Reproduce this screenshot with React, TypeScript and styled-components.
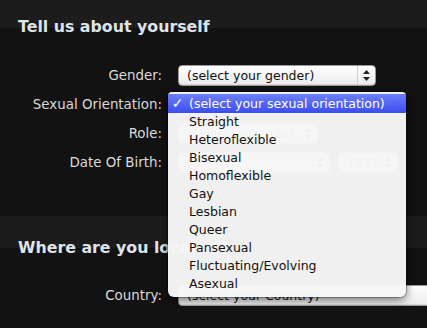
import React from 'react';
import styled, { createGlobalStyle } from 'styled-components';

const GlobalStyle = createGlobalStyle`
    html, body {
        margin: 0;
        background: #121212;
    }
    body {
        font-family: "DejaVu Sans", Verdana, sans-serif;
        overflow: hidden;
    }
`;

const Section = styled.section<{ $bottom: number }>`
    padding-bottom: ${p => p.$bottom}px;
`;

const Heading = styled.h2<{ $band: number; $top: number }>`
    margin: 0;
    padding: ${p => p.$top}px 18px 0;
    font-size: 15.8px;
    line-height: 18px;
    font-weight: bold;
    color: #dfe3ea;
    background: linear-gradient(#1c1c1c 0 ${p => p.$band}px, transparent ${p => p.$band}px);
`;

const Form = styled.div<{ $top: number }>`
    display: grid;
    grid-template-columns: 162px auto;
    grid-auto-rows: 21px;
    column-gap: 16px;
    row-gap: 8px;
    padding-top: ${p => p.$top}px;
`;

const Label = styled.div`
    text-align: right;
    font-size: 13.4px;
    line-height: 21px;
    color: #dadada;
    white-space: nowrap;
`;

const Controls = styled.div`
    position: relative;
    display: flex;
    gap: 8px;
`;

const SelectBox = styled.div<{ $width: number }>`
    display: flex;
    box-sizing: border-box;
    width: ${p => p.$width}px;
    flex-shrink: 0;
    height: 21px;
    border-radius: 4px;
    border: 1px solid #9a9a9a;
    background: linear-gradient(#ffffff, #ebebeb);
    box-shadow: inset 0 -1px 0 #d8d8d8;
    overflow: hidden;
`;

const SelectText = styled.div`
    flex: 1;
    padding-left: 8px;
    font-size: 12.5px;
    line-height: 19px;
    color: #111;
    white-space: nowrap;
    overflow: hidden;
`;

const Stepper = styled.div`
    width: 17px;
    display: flex;
    align-items: center;
    justify-content: center;
    border-left: 1px solid #cfcfcf;
`;

const Menu = styled.ul`
    position: absolute;
    z-index: 10;
    left: -10px;
    top: -2px;
    width: 238px;
    margin: 0;
    padding: 2px 0 4px;
    list-style: none;
    border-radius: 4px 4px 6px 6px;
    background: rgba(246, 246, 246, 0.975);
    box-shadow: 0 3px 10px rgba(0, 0, 0, 0.55), 0 0 0 1px rgba(0, 0, 0, 0.25);
`;

const Item = styled.li<{ $active?: boolean }>`
    display: flex;
    height: ${p => (p.$active ? 19 : 18)}px;
    line-height: ${p => (p.$active ? 19 : 18)}px;
    font-size: 12.5px;
    color: ${p => (p.$active ? '#fff' : '#111')};
    background: ${p => (p.$active ? 'linear-gradient(#6c7ff6, #3a4def)' : 'transparent')};
    white-space: nowrap;
`;

const Check = styled.span`
    width: 21px;
    padding-right: 2px;
    box-sizing: border-box;
    text-align: center;
    font-size: 14px;
    font-weight: bold;
`;

const Arrows = () => (
    <svg width="7" height="11" viewBox="0 0 7 11">
        <path d="M3.5 0 L7 4 L0 4 Z M0 7 L7 7 L3.5 11 Z" fill="#222" />
    </svg>
);

const Select = ({ width, text }: { width: number; text: string }) => (
    <SelectBox $width={width}>
        <SelectText>{text}</SelectText>
        <Stepper>
            <Arrows />
        </Stepper>
    </SelectBox>
);

const orientations = [
    'Straight',
    'Heteroflexible',
    'Bisexual',
    'Homoflexible',
    'Gay',
    'Lesbian',
    'Queer',
    'Pansexual',
    'Fluctuating/Evolving',
    'Asexual',
];

const App: React.FC = () => {
    return (
        <>
            <GlobalStyle />
            <Section $bottom={43}>
                <Heading $band={28} $top={18}>Tell us about yourself</Heading>
                <Form $top={29}>
                    <Label>Gender:</Label>
                    <Controls>
                        <Select width={198} text="(select your gender)" />
                    </Controls>
                    <Label>Sexual Orientation:</Label>
                    <Controls>
                        <Select width={228} text="(select your sexual orientation)" />
                        <Menu>
                            <Item $active>
                                <Check>✓</Check>
                                (select your sexual orientation)
                            </Item>
                            {orientations.map(o => (
                                <Item key={o}>
                                    <Check />
                                    {o}
                                </Item>
                            ))}
                        </Menu>
                    </Controls>
                    <Label>Role:</Label>
                    <Controls>
                        <Select width={140} text="(select your role)" />
                    </Controls>
                    <Label>Date Of Birth:</Label>
                    <Controls>
                        <Select width={152} text="July" />
                        <Select width={60} text="1977" />
                    </Controls>
                </Form>
            </Section>
            <Section $bottom={0}>
                <Heading $band={32} $top={23}>Where are you located?</Heading>
                <Form $top={28}>
                    <Label>Country:</Label>
                    <Controls>
                        <Select width={270} text="(select your Country)" />
                    </Controls>
                </Form>
            </Section>
        </>
    );
};

export default App;
